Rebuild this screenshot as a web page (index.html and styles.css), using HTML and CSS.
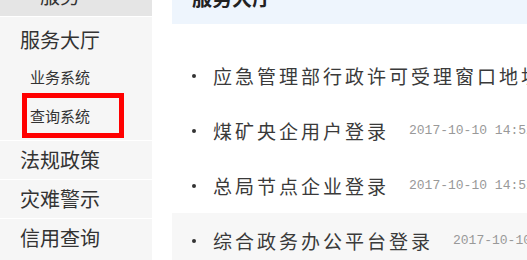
FILE: index.html
```html
<!DOCTYPE html>
<html lang="zh-CN">
<head>
<meta charset="utf-8">
<title>服务大厅</title>
<link rel="stylesheet" href="styles.css">
</head>
<body>
<div class="page">
  <aside class="side">
    <div class="side-top"><span class="side-top-text">服务</span></div>
    <div class="side-title">服务大厅</div>
    <div class="side-sub">业务系统</div>
    <div class="side-sub side-sub-active"><span class="side-sub-text">查询系统</span></div>
    <div class="side-row">法规政策</div>
    <div class="side-row">灾难警示</div>
    <div class="side-row">信用查询</div>
  </aside>
  <main class="main">
    <div class="main-head"><span class="main-head-text">服务大厅</span></div>
    <ul class="list">
      <li class="item"><span class="dot"></span><span class="title">应急管理部行政许可受理窗口地址</span></li>
      <li class="item"><span class="dot"></span><span class="title">煤矿央企用户登录</span><span class="date">2017-10-10 14:52</span></li>
      <li class="item"><span class="dot"></span><span class="title">总局节点企业登录</span><span class="date">2017-10-10 14:52</span></li>
      <li class="item item-hover"><span class="dot"></span><span class="title">综合政务办公平台登录</span><span class="date">2017-10-10 14:52</span></li>
    </ul>
  </main>
</div>
</body>
</html>
```
FILE: styles.css
```css
html, body {
  margin: 0;
  padding: 0;
  background: #fff;
}
body {
  font-family: "Noto Sans CJK SC", "Noto Sans", sans-serif;
  color: #333;
  width: 527px;
  height: 260px;
  overflow: hidden;
}
.page {
  display: flex;
  height: 260px;
  overflow: hidden;
}
.side {
  width: 152px;
  flex: none;
  background: #f6f6f6;
}
.side-top {
  height: 16px;
  background: #e5e5e5;
  border-bottom: 1px solid #fff;
  overflow: hidden;
  padding-left: 40px;
}
.side-top-text {
  display: block;
  font-size: 20px;
  line-height: 20px;
  margin-top: -14px;
}
.side-title {
  font-size: 20px;
  line-height: 46px;
  height: 46px;
  padding-left: 20px;
  color: #333;
}
.side-sub {
  font-size: 15px;
  line-height: 28px;
  height: 28px;
  padding-left: 30px;
  color: #333;
}
.side-sub-active {
  margin: 2px 0 0 22px;
  width: 89px;
  height: 35px;
  line-height: 35px;
  border: 5px solid #f00;
  padding-left: 3px;
}
.side-row {
  border-top: 1px solid #fff;
  margin-top: 2px;
  height: 38px;
  line-height: 38px;
  font-size: 20px;
  padding-left: 20px;
  color: #333;
}
.side-row + .side-row {
  margin-top: 0;
}
.main {
  flex: 1;
  margin-left: 20px;
  overflow: hidden;
  white-space: nowrap;
}
.main-head {
  height: 24px;
  background: #eef5fd;
  overflow: hidden;
  padding-left: 20px;
}
.main-head-text {
  display: block;
  font-size: 20px;
  line-height: 20px;
  font-weight: bold;
  margin-top: -12px;
  color: #222;
}
.list {
  list-style: none;
  margin: 24px 0 0;
  padding: 0;
}
.item {
  display: flex;
  align-items: center;
  height: 55px;
  padding-left: 20px;
}
.item-hover {
  background: #f7f7f7;
}
.dot {
  width: 4px;
  height: 4px;
  border-radius: 50%;
  background: #333;
  flex: none;
  margin-right: 17px;
}
.title {
  font-size: 19px;
  letter-spacing: 3px;
  color: #3a3a3a;
  flex: none;
}
.date {
  margin-left: 20px;
  font-family: "Liberation Mono", monospace;
  font-size: 13px;
  color: #999;
  flex: none;
}
```
